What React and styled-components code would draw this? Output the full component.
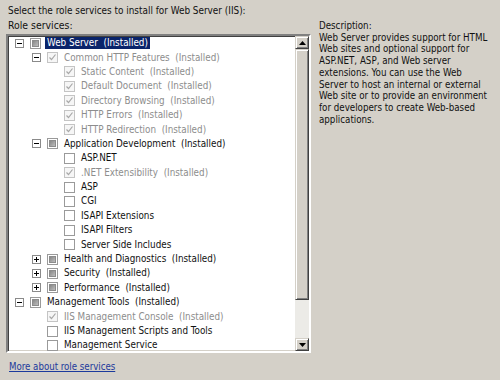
import React from "react";
import styled, { createGlobalStyle, css } from "styled-components";

const GlobalStyle = createGlobalStyle`
  html, body {
    margin: 0;
    background: #d4d0c8;
  }
  body {
    font-family: "DejaVu Sans Condensed", "DejaVu Sans", "Liberation Sans", sans-serif;
    font-stretch: condensed;
    font-size: 9.8px;
    color: #111;
  }
`;

const Page = styled.div`
  width: 500px;
  height: 380px;
  box-sizing: border-box;
  padding: 4px 0 0 6px;
  background: #d4d0c8;
  overflow: hidden;
`;

const Heading = styled.div`
  padding-left: 2px;
  font-size: 9.9px;
  line-height: 13px;
  white-space: nowrap;
`;

const Body = styled.div`
  display: flex;
  margin-top: 2px;
`;

const LeftColumn = styled.div`
  display: flex;
  flex-direction: column;
`;

const Label = styled.div`
  padding-left: 2px;
  font-size: 10.4px;
  line-height: 13px;
  margin-bottom: 2px;
`;

const ListBox = styled.div`
  width: 305px;
  height: 319px;
  box-sizing: border-box;
  display: flex;
  background: #fff;
  border-style: solid;
  border-width: 2px;
  border-color: #808080 #ffffff #ffffff #808080;
  box-shadow: inset 1px 1px 0 #404040, inset -1px -1px 0 #d4d0c8;
`;

const Tree = styled.div`
  flex: 1;
  overflow: hidden;
`;

const Row = styled.div`
  display: flex;
  align-items: center;
  height: 14.4px;
  padding-left: ${(p) => 7 + p.$level * 17}px;
  white-space: nowrap;
`;

const ExpanderSlot = styled.div`
  width: 9px;
  height: 9px;
  flex: none;
  margin-right: 6px;
`;

const Expander = styled.div`
  width: 9px;
  height: 9px;
  box-sizing: border-box;
  border: 1px solid #8a8a8a;
  background: #fff;
  position: relative;
  &::before {
    content: "";
    position: absolute;
    left: 1px;
    top: 3px;
    width: 5px;
    height: 1px;
    background: #000;
  }
  ${(p) =>
    p.$plus &&
    css`
      &::after {
        content: "";
        position: absolute;
        left: 3px;
        top: 1px;
        width: 1px;
        height: 5px;
        background: #000;
      }
    `}
`;

const Box = styled.div`
  width: 11px;
  height: 11px;
  flex: none;
  box-sizing: border-box;
  margin-right: 6px;
  border: 1px solid ${(p) => (p.$state === "installed" ? "#c4c4c4" : "#9a9a9a")};
  background: ${(p) => (p.$state === "installed" ? "#f6f6f6" : "#fff")};
  display: flex;
  align-items: center;
  justify-content: center;
`;

const Partial = styled.div`
  width: 7px;
  height: 7px;
  background: linear-gradient(135deg, #7c7c7c, #c8c8c8);
  box-shadow: inset 0 0 0 1px #8c8c8c;
`;

const Text = styled.span`
  color: ${(p) => (p.$dim ? "#8d8d8d" : "#111")};
  line-height: 12px;
  padding: 0 2px;
  margin-left: -2px;
  ${(p) =>
    p.$selected &&
    css`
      background: #0a246a;
      color: #fff;
    `}
`;

const Scrollbar = styled.div`
  width: 14px;
  flex: none;
  display: flex;
  flex-direction: column;
  background: #ecebe7;
`;

const ArrowButton = styled.div`
  height: 13px;
  box-sizing: border-box;
  background: #d4d0c8;
  border-style: solid;
  border-width: 1px;
  border-color: #d4d0c8 #404040 #404040 #d4d0c8;
  box-shadow: inset 1px 1px 0 #fff, inset -1px -1px 0 #808080;
  display: flex;
  align-items: center;
  justify-content: center;
`;

const Thumb = styled.div`
  height: 251px;
  box-sizing: border-box;
  background: #d4d0c8;
  border-style: solid;
  border-width: 1px;
  border-color: #d4d0c8 #404040 #404040 #d4d0c8;
  box-shadow: inset 1px 1px 0 #fff, inset -1px -1px 0 #808080;
`;

const Track = styled.div`
  flex: 1;
`;

const Description = styled.div`
  margin-left: 8px;
  margin-top: 1px;
  font-size: 9.7px;
  line-height: 11.7px;
  white-space: nowrap;
`;

const MoreLink = styled.a`
  display: block;
  margin-top: 8px;
  padding-left: 3px;
  font-size: 9.6px;
  line-height: 12px;
  color: #1c3a9c;
  text-decoration: underline;
  cursor: pointer;
`;

const Check = () => (
  <svg width="7" height="7" viewBox="0 0 7 7">
    <path d="M0.5 3.5 L2.5 5.5 L6.5 0.5" fill="none" stroke="#a8a8a8" strokeWidth="1.2" />
  </svg>
);

const Arrow = ({ down }) => (
  <svg width="7" height="4" viewBox="0 0 7 4">
    <path d={down ? "M0 0 L7 0 L3.5 4 Z" : "M0 4 L7 4 L3.5 0 Z"} fill="#000" />
  </svg>
);

const rows = [
  { level: 0, exp: "minus", state: "partial", text: "Web Server", selected: true },
  { level: 1, exp: "minus", state: "installed", text: "Common HTTP Features", dim: true },
  { level: 2, state: "installed", text: "Static Content", dim: true },
  { level: 2, state: "installed", text: "Default Document", dim: true },
  { level: 2, state: "installed", text: "Directory Browsing", dim: true },
  { level: 2, state: "installed", text: "HTTP Errors", dim: true },
  { level: 2, state: "installed", text: "HTTP Redirection", dim: true },
  { level: 1, exp: "minus", state: "partial", text: "Application Development" },
  { level: 2, state: "empty", text: "ASP.NET", plain: true },
  { level: 2, state: "installed", text: ".NET Extensibility", dim: true },
  { level: 2, state: "empty", text: "ASP", plain: true },
  { level: 2, state: "empty", text: "CGI", plain: true },
  { level: 2, state: "empty", text: "ISAPI Extensions", plain: true },
  { level: 2, state: "empty", text: "ISAPI Filters", plain: true },
  { level: 2, state: "empty", text: "Server Side Includes", plain: true },
  { level: 1, exp: "plus", state: "partial", text: "Health and Diagnostics" },
  { level: 1, exp: "plus", state: "partial", text: "Security" },
  { level: 1, exp: "plus", state: "partial", text: "Performance" },
  { level: 0, exp: "minus", state: "partial", text: "Management Tools" },
  { level: 1, state: "installed", text: "IIS Management Console", dim: true },
  { level: 1, state: "empty", text: "IIS Management Scripts and Tools", plain: true },
  { level: 1, state: "empty", text: "Management Service", plain: true },
];

const TreeRow = ({ row }) => (
  <Row $level={row.level}>
    <ExpanderSlot>{row.exp && <Expander $plus={row.exp === "plus"} />}</ExpanderSlot>
    <Box $state={row.state}>
      {row.state === "installed" && <Check />}
      {row.state === "partial" && <Partial />}
    </Box>
    <Text $dim={row.dim} $selected={row.selected}>
      {row.plain ? row.text : `${row.text}\u00a0\u00a0(Installed)`}
    </Text>
  </Row>
);

export default function App() {
  return (
    <>
      <GlobalStyle />
      <Page>
        <Heading>Select the role services to install for Web Server (IIS):</Heading>
        <Body>
          <LeftColumn>
            <Label>Role services:</Label>
            <ListBox>
              <Tree>
                {rows.map((row, i) => (
                  <TreeRow key={i} row={row} />
                ))}
              </Tree>
              <Scrollbar>
                <ArrowButton>
                  <Arrow />
                </ArrowButton>
                <Thumb />
                <Track />
                <ArrowButton>
                  <Arrow down />
                </ArrowButton>
              </Scrollbar>
            </ListBox>
          </LeftColumn>
          <Description>
            Description:
            <br />
            Web Server provides support for HTML
            <br />
            Web sites and optional support for
            <br />
            ASP.NET, ASP, and Web server
            <br />
            extensions. You can use the Web
            <br />
            Server to host an internal or external
            <br />
            Web site or to provide an environment
            <br />
            for developers to create Web-based
            <br />
            applications.
          </Description>
        </Body>
        <MoreLink>More about role services</MoreLink>
      </Page>
    </>
  );
}
